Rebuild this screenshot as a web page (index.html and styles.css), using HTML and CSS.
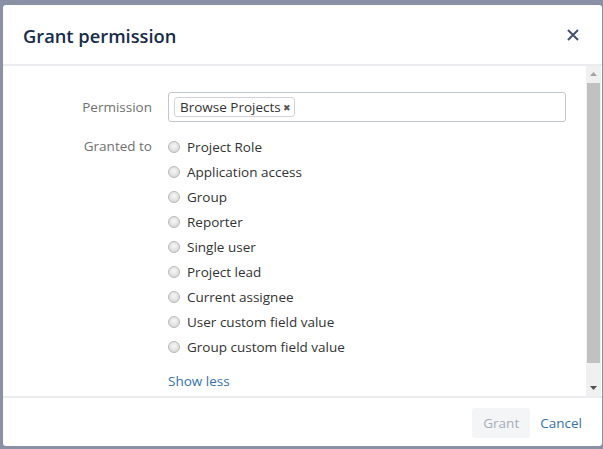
FILE: index.html
```html
<!DOCTYPE html>
<html>
<head>
<meta charset="utf-8">
<link rel="stylesheet" href="styles.css">
</head>
<body>
<div class="dialog">
  <div class="dlg-header">
    <h2 class="dlg-title">Grant permission</h2>
    <span class="dlg-close" aria-label="Close">
      <svg width="12" height="12" viewBox="0 0 12 12"><path d="M1 1 L11 11 M11 1 L1 11" stroke="#42526e" stroke-width="2" fill="none"/></svg>
    </span>
  </div>
  <div class="dlg-body">
    <div class="dlg-content">
      <div class="form-row">
        <div class="field-label">Permission</div>
        <div class="field-input">
          <span class="tag">Browse Projects<span class="tag-x">&#x2716;</span></span>
        </div>
      </div>
      <div class="form-row">
        <div class="field-label label-radios">Granted to</div>
        <div class="radio-group">
          <div class="radio"><span class="radio-dot"></span>Project Role</div>
          <div class="radio"><span class="radio-dot"></span>Application access</div>
          <div class="radio"><span class="radio-dot"></span>Group</div>
          <div class="radio"><span class="radio-dot"></span>Reporter</div>
          <div class="radio"><span class="radio-dot"></span>Single user</div>
          <div class="radio"><span class="radio-dot"></span>Project lead</div>
          <div class="radio"><span class="radio-dot"></span>Current assignee</div>
          <div class="radio"><span class="radio-dot"></span>User custom field value</div>
          <div class="radio"><span class="radio-dot"></span>Group custom field value</div>
          <a class="show-less">Show less</a>
        </div>
      </div>
    </div>
    <div class="scrollbar">
      <div class="sb-arrow"><svg width="7" height="4" viewBox="0 0 7 4"><path d="M0 4 L3.5 0 L7 4 Z" fill="#a3a3a3"/></svg></div>
      <div class="sb-track"><div class="sb-thumb"></div></div>
      <div class="sb-arrow"><svg width="7" height="4" viewBox="0 0 7 4"><path d="M0 0 L7 0 L3.5 4 Z" fill="#505050"/></svg></div>
    </div>
  </div>
  <div class="dlg-footer">
    <button class="btn-grant" disabled>Grant</button>
    <a class="btn-cancel">Cancel</a>
  </div>
</div>
</body>
</html>
```

FILE: styles.css
```css
html, body {
  margin: 0;
  padding: 0;
}
body {
  background: #8a91a6;
  width: 603px;
  height: 449px;
  overflow: hidden;
  padding: 5px 0 0 3px;
  box-sizing: border-box;
  font-family: "Open Sans", "Liberation Sans", sans-serif;
  font-size: 13.5px;
}
.dialog {
  width: 599px;
  height: 441px;
  background: #fff;
  border-radius: 3px;
  display: flex;
  flex-direction: column;
  overflow: hidden;
}
.dlg-header {
  height: 61px;
  flex: none;
  display: flex;
  align-items: center;
  justify-content: space-between;
  padding: 1px 23px 0 20px;
  border-bottom: 2px solid #ebecf0;
  box-sizing: border-box;
}
.dlg-title {
  margin: 0;
  font-size: 18.3px;
  font-weight: 600;
  color: #172b4d;
  letter-spacing: 0;
}
.dlg-close {
  display: flex;
  width: 12px;
  height: 12px;
  margin-top: 0;
}
.dlg-body {
  flex: 1;
  display: flex;
  min-height: 0;
}
.dlg-content {
  flex: 1;
  padding: 26px 20px 0 0;
}
.form-row {
  display: grid;
  grid-template-columns: 149px 1fr;
  column-gap: 16px;
  margin-bottom: 12px;
}
.field-label {
  text-align: right;
  color: #707070;
  line-height: 30px;
}
.label-radios {
  line-height: 25px;
}
.field-input {
  height: 30px;
  border: 1px solid #c1c7d0;
  border-radius: 3px;
  box-sizing: border-box;
  display: flex;
  align-items: center;
  padding-left: 5px;
}
.tag {
  display: inline-flex;
  align-items: center;
  height: 20px;
  border: 1px solid #cfd3d9;
  border-radius: 3px;
  box-sizing: border-box;
  padding: 0 3px 0 5px;
  color: #333;
}
.tag-x {
  font-size: 9px;
  color: #555;
  margin-left: 2px;
}
.radio-group {
  display: flex;
  flex-direction: column;
}
.radio {
  display: flex;
  align-items: center;
  height: 25px;
  color: #333;
}
.radio-dot {
  width: 12px;
  height: 12px;
  border-radius: 50%;
  border: 1px solid #b9b9b9;
  box-sizing: border-box;
  background: radial-gradient(circle at 50% 40%, #f7f7f7 0%, #e2e2e2 55%, #cfcfcf 100%);
  margin: 0 7px 0 0;
}
.show-less {
  color: #3572b0;
  margin-top: 12px;
  line-height: 20px;
  width: max-content;
}
.scrollbar {
  width: 15px;
  flex: none;
  background: #f0f0f0;
  display: flex;
  flex-direction: column;
  margin-right: 1px;
}
.sb-arrow {
  height: 16px;
  display: flex;
  align-items: center;
  justify-content: center;
  flex: none;
}
.sb-track {
  flex: 1;
  padding: 1px 1px 17px 1px;
  display: flex;
}
.sb-thumb {
  flex: 1;
  background: #c1c1c1;
}
.dlg-footer {
  height: 50px;
  flex: none;
  border-top: 2px solid #ebecf0;
  box-sizing: border-box;
  display: flex;
  align-items: center;
  justify-content: flex-end;
  padding: 2px 20px 0 0;
  gap: 10px;
}
.btn-grant {
  font-family: inherit;
  font-size: 13.5px;
  height: 30px;
  width: 58px;
  border: none;
  border-radius: 3px;
  background: #f4f5f7;
  color: #a5adba;
  padding: 0;
}
.btn-cancel {
  color: #3572b0;
}
```
